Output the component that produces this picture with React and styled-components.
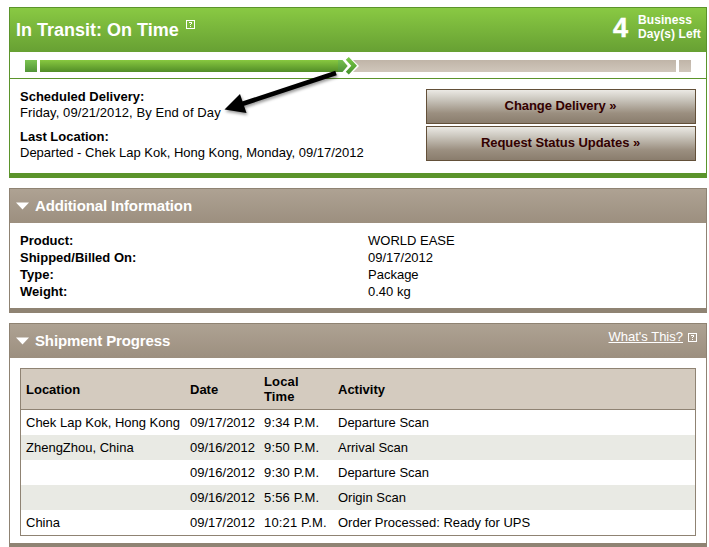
import React from "react"
import styled, { createGlobalStyle } from "styled-components"

const details = [
  { label: "Product:", value: "WORLD EASE" },
  { label: "Shipped/Billed On:", value: "09/17/2012" },
  { label: "Type:", value: "Package" },
  { label: "Weight:", value: "0.40 kg" },
]

const scans = [
  ["Chek Lap Kok, Hong Kong", "09/17/2012", "9:34 P.M.", "Departure Scan"],
  ["ZhengZhou, China", "09/16/2012", "9:50 P.M.", "Arrival Scan"],
  ["", "09/16/2012", "9:30 P.M.", "Departure Scan"],
  ["", "09/16/2012", "5:56 P.M.", "Origin Scan"],
  ["China", "09/17/2012", "10:21 P.M.", "Order Processed: Ready for UPS"],
]

const HelpIcon = () => (
  <svg width="9" height="9" viewBox="0 0 9 9" shapeRendering="crispEdges">
    <path d="M0.5 0.5h8v8h-8z" fill="none" stroke="#fff" />
    <path d="M3 2h3v1h-3zM5 3h1v1h-1zM4 4h1v1h-1zM4 6h1v1h-1z" fill="#fff" />
  </svg>
)

const Triangle = () => (
  <svg width="13" height="8" viewBox="0 0 13 8">
    <path d="M0 0.5h13L6.5 7.5z" fill="#fff" />
  </svg>
)

const ProgressTrack = () => (
  <Track>
    <Cap $done />
    <Done />
    <Left />
    <Cap />
    <Chevron width="22" height="18" viewBox="0 0 22 18">
      <defs>
        <linearGradient id="tip" x1="0" y1="0" x2="0" y2="1">
          <stop offset="0" stopColor="#75c04f" />
          <stop offset="1" stopColor="#4f9237" />
        </linearGradient>
        <linearGradient id="chevron" x1="0" y1="0" x2="0" y2="1">
          <stop offset="0" stopColor="#7ccb48" />
          <stop offset="1" stopColor="#43902c" />
        </linearGradient>
      </defs>
      <path d="M4 3H15L21 9L15 15H4z" fill="#fff" />
      <path d="M0 3h4.500L9.700 9L4.500 15H0z" fill="url(#tip)" />
      <path
        d="M10.800 0L19 8.800L10.800 17.600L7.800 14.800L13.300 8.800L7.800 2.800z"
        fill="url(#chevron)"
      />
    </Chevron>
  </Track>
)

const App = () => {
  return (
    <Page>
      <GlobalStyle />
      <Panel $green>
        <StatusHeader>
          <StatusTitle>In Transit: On Time</StatusTitle>
          <HelpIcon />
          <DaysLeft>
            <strong>4</strong>
            <span>
              Business
              <br />
              Day(s) Left
            </span>
          </DaysLeft>
        </StatusHeader>
        <ProgressTrack />
        <StatusBody>
          <Summary>
            <dt>Scheduled Delivery:</dt>
            <Delivery>Friday, 09/21/2012, By End of Day</Delivery>
            <dt>Last Location:</dt>
            <dd>Departed - Chek Lap Kok, Hong Kong, Monday, 09/17/2012</dd>
          </Summary>
          <Actions>
            <ActionButton>Change Delivery »</ActionButton>
            <ActionButton>Request Status Updates »</ActionButton>
          </Actions>
        </StatusBody>
        <Arrow width="124" height="56" viewBox="0 0 124 56">
          <path d="M21 38L115 7" stroke="#000" strokeWidth="4.6" />
          <path d="M3.500 43.500L19 28L25.500 47z" fill="#000" />
        </Arrow>
      </Panel>

      <Panel>
        <SectionHeader>
          <Triangle />
          <h2>Additional Information</h2>
        </SectionHeader>
        <Details>
          {details.map(item => (
            <DetailRow key={item.label}>
              <b>{item.label}</b>
              <span>{item.value}</span>
            </DetailRow>
          ))}
        </Details>
      </Panel>

      <Panel>
        <SectionHeader>
          <Triangle />
          <h2>Shipment Progress</h2>
          <WhatsThis>
            <a>What's This?</a>
            <HelpIcon />
          </WhatsThis>
        </SectionHeader>
        <ScanTable>
          <ScanHead>
            <span>Location</span>
            <span>Date</span>
            <span>
              Local
              <br />
              Time
            </span>
            <span>Activity</span>
          </ScanHead>
          {scans.map((scan, i) => (
            <ScanRow key={i} $shaded={i % 2 === 1}>
              {scan.map((cell, j) => (
                <span key={j}>{cell}</span>
              ))}
            </ScanRow>
          ))}
        </ScanTable>
      </Panel>
    </Page>
  )
}

const GlobalStyle = createGlobalStyle`
  body {
    margin: 0;
    background: #fff;
    overflow: hidden;
  }
  * {
    box-sizing: border-box;
  }
`

const Page = styled.div`
  height: 547px;
  overflow: hidden;
  padding: 7px 2px 0 9px;
  display: flex;
  flex-direction: column;
  gap: 10px;
  font: 13px/16px "Liberation Sans", Arial, sans-serif;
  color: #000;
  svg {
    display: block;
    flex: none;
  }
`

const Panel = styled.section`
  position: relative;
  flex: none;
  border: 1px solid ${props => (props.$green ? "#5b942b" : "#8f8373")};
  border-bottom-width: 5px;
`

const StatusHeader = styled.header`
  height: 44px;
  padding-left: 6px;
  display: flex;
  align-items: flex-start;
  color: #fff;
  background: linear-gradient(#89c943, #67a033);
  svg {
    margin-top: 12px;
  }
`

const StatusTitle = styled.h1`
  margin: 11px 7px 0 0;
  width: 163px;
  font-size: 18px;
  line-height: 22px;
  white-space: nowrap;
`

const DaysLeft = styled.div`
  margin-left: auto;
  display: flex;
  width: 93px;
  font-weight: bold;
  font-size: 12px;
  line-height: 14px;
  letter-spacing: 0.08px;
  white-space: nowrap;
  strong {
    width: 25px;
    font-size: 27px;
    line-height: 40px;
    -webkit-text-stroke: 0.5px #fff;
  }
  span {
    padding-top: 5px;
  }
`

const Track = styled.div`
  position: relative;
  height: 27px;
  padding: 8px 15px 0;
  display: flex;
  gap: 3px;
  border-bottom: 1px solid #5b942b;
`

const Cap = styled.i`
  width: 12px;
  height: 12px;
  background: ${props =>
    props.$done
      ? "linear-gradient(#7cc552, #529438)"
      : "linear-gradient(#c0b5a8, #d0c7bb)"};
`

const Done = styled.i`
  width: 302px;
  height: 12px;
  background: linear-gradient(#88c840, #528d27);
`

const Left = styled.i`
  flex: 1;
  height: 12px;
  background: linear-gradient(#c0b5a8, #d0c7bb);
`

const Chevron = styled.svg`
  position: absolute;
  left: 328px;
  top: 5px;
`

const StatusBody = styled.div`
  height: 94px;
  padding: 10px 10px 0;
  display: flex;
  justify-content: space-between;
`

const Summary = styled.dl`
  margin: 0;
  white-space: nowrap;
  dt {
    font-weight: bold;
  }
  dd {
    margin: 0 0 8px;
  }
`

const Delivery = styled.dd`
  letter-spacing: 0.09px;
`

const Actions = styled.div`
  width: 270px;
  display: flex;
  flex-direction: column;
  gap: 2px;
`

const ActionButton = styled.button`
  height: 35px;
  padding: 0 1px 2px 0;
  border: 1px solid #635039;
  background: linear-gradient(#ebe9e4, #cbc7be 28%, #9b8f80 70%, #8a7d6d);
  color: #330000;
  font: bold 13px/16px "Liberation Sans", Arial, sans-serif;
  letter-spacing: -0.05px;
`

const Arrow = styled.svg`
  position: absolute;
  left: 211px;
  top: 58px;
  filter: drop-shadow(1px 2px 1.5px rgba(0, 0, 0, 0.4));
`

const SectionHeader = styled.header`
  height: 34px;
  padding: 0 6px;
  display: flex;
  align-items: center;
  color: #fff;
  background: linear-gradient(#aea293, #9c8f7f);
  h2 {
    margin: 0 0 0 6px;
    font-size: 15px;
    line-height: 18px;
    letter-spacing: -0.14px;
    white-space: nowrap;
  }
`

const WhatsThis = styled.div`
  margin: 0 3px 8px auto;
  display: flex;
  align-items: center;
  gap: 5px;
  a {
    text-decoration: underline;
  }
  svg {
    margin-top: 1px;
  }
`

const Details = styled.div`
  height: 85px;
  padding: 9px 10px 0;
  line-height: 17px;
`

const DetailRow = styled.div`
  display: grid;
  grid-template-columns: 348px 1fr;
`

const ScanTable = styled.div`
  margin: 10px 10px 7px;
  border: 1px solid #8f8373;
`

const ScanRow = styled.div`
  height: 25px;
  padding-left: 5px;
  display: grid;
  grid-template-columns: 164px 74px 74px 1fr;
  align-items: center;
  white-space: nowrap;
  background: ${props => (props.$shaded ? "#e9eae4" : "#fff")};
  span:nth-child(3) {
    letter-spacing: 0.15px;
  }
`

const ScanHead = styled(ScanRow)`
  height: 41px;
  border-bottom: 1px solid #8f8373;
  background: #d4cbbf;
  font-weight: bold;
  line-height: 15px;
`

export default App
